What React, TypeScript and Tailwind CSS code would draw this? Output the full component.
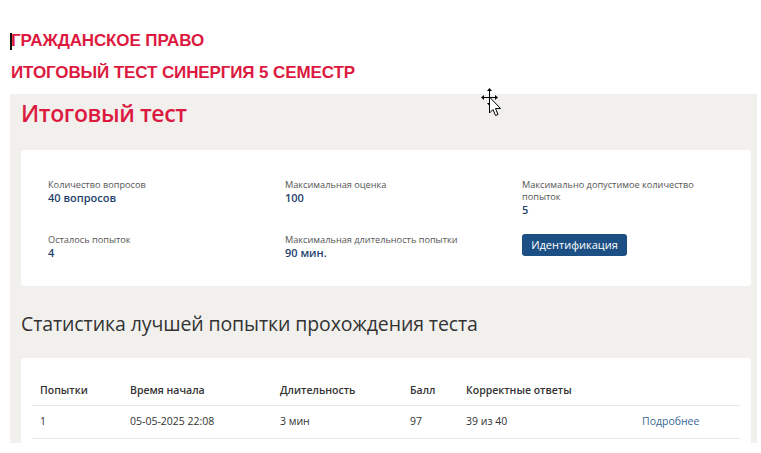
import React from 'react';

const stats = [
    { label: 'Количество вопросов', value: '40 вопросов' },
    { label: 'Максимальная оценка', value: '100' },
    { label: <>Максимально допустимое количество<br />попыток</>, value: '5' },
    { label: 'Осталось попыток', value: '4' },
    { label: 'Максимальная длительность попытки', value: '90 мин.' },
];

const MoveCursor: React.FC = () => (
    <svg className="absolute left-[478px] top-[86px]" width="28" height="34" viewBox="0 0 28 34">
        {/* move cross */}
        <g fill="#000">
            <rect x="11" y="4" width="1" height="14" />
            <rect x="4" y="11" width="15" height="1" />
            <path d="M11.5 2 L9 5 L14 5 Z" />
            <path d="M3 11.5 L6 9 L6 14 Z" />
            <path d="M20 11.5 L17 9 L17 14 Z" />
            <path d="M11.5 20 L9 17 L14 17 Z" />
        </g>
        {/* pointer */}
        <path d="M11.5 11 L11.5 27 L15 23.5 L17.5 29.5 L20 28.5 L17.5 22.5 L22.5 22.5 Z" fill="#fff" stroke="#000" strokeWidth="1" strokeLinejoin="miter" />
    </svg>
);

const App: React.FC = () => {
    return (
        <div className="relative w-[761px] h-[453px] bg-white overflow-hidden" style={{ fontFamily: '"Open Sans", sans-serif' }}>
            {/* text caret */}
            <div className="absolute left-[10px] top-[33px] w-[2px] h-[17px] bg-[#111]" />
            <MoveCursor />

            <div className="pt-[25px] pl-[11px] text-[17px] leading-[32px] font-bold text-[#dc1a3f] tracking-[-0.12px]" style={{ fontFamily: '"Liberation Sans", Arial, sans-serif' }}>
                <div>ГРАЖДАНСКОЕ ПРАВО</div>
                <div>ИТОГОВЫЙ ТЕСТ СИНЕРГИЯ 5 СЕМЕСТР</div>
            </div>

            <div className="mt-[5px] ml-[10px] w-[747px] h-[349px] bg-[#f1f0ed] pl-[11px] pr-[6px] overflow-hidden">
                <h1 className="pt-[3px] h-[56px] text-[23px] leading-[32px] font-semibold text-[#dc1a3f] tracking-[-0.4px]">
                    Итоговый тест
                </h1>

                <div className="bg-white rounded-[3px] h-[136px] pl-[27px] pt-[29px]">
                    <div className="grid grid-cols-[237px_237px_1fr] grid-rows-[55px_auto]">
                        {stats.map((s, i) => (
                            <div key={i}>
                                <div className="text-[9.2px] leading-[12px] text-[#555]">{s.label}</div>
                                <div className="text-[11px] leading-[13px] font-semibold text-[#1e3f6d]">{s.value}</div>
                            </div>
                        ))}
                        <div className="-mt-[3px]">
                            <button className="h-[22px] w-[105px] rounded-[3px] bg-[#1c4f84] text-white text-[11px] leading-[22px] font-normal">
                                Идентификация
                            </button>
                        </div>
                    </div>
                </div>

                <h2 className="pt-[24px] h-[72px] text-[19.5px] leading-[28px] text-[#333] font-normal tracking-[-0.1px]">
                    Статистика лучшей попытки прохождения теста
                </h2>

                <div className="bg-white rounded-[3px] h-[200px] px-[11px] pt-[20px]">
                    <table className="w-full text-[10.5px] text-[#333] border-collapse">
                        <thead>
                            <tr className="border-b border-[#e6e6e6] text-left">
                                <th className="w-[98px] pl-[8px] h-[27px] font-semibold">Попытки</th>
                                <th className="w-[150px] font-semibold">Время начала</th>
                                <th className="w-[130px] font-semibold">Длительность</th>
                                <th className="w-[56px] font-semibold">Балл</th>
                                <th className="w-[176px] font-semibold">Корректные ответы</th>
                                <th></th>
                            </tr>
                        </thead>
                        <tbody>
                            <tr className="border-b border-[#e6e6e6]">
                                <td className="pl-[8px] h-[33px]">1</td>
                                <td>05-05-2025 22:08</td>
                                <td>3 мин</td>
                                <td>97</td>
                                <td>39 из 40</td>
                                <td className="text-[#3a6897]">Подробнее</td>
                            </tr>
                        </tbody>
                    </table>
                </div>
            </div>
        </div>
    );
};

export default App;
